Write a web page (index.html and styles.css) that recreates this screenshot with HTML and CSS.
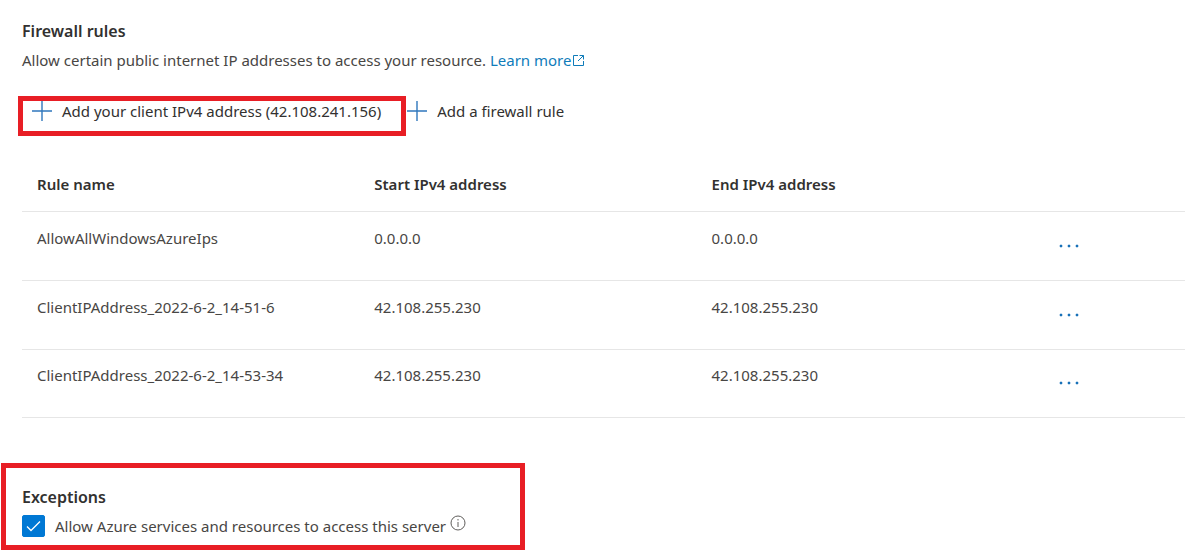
FILE: index.html
```html
<!DOCTYPE html>
<html lang="en">
<head>
<meta charset="utf-8">
<title>Firewall rules</title>
<link rel="stylesheet" href="styles.css">
</head>
<body>
<main class="page">
  <section class="firewall">
    <h2 class="heading">Firewall rules</h2>
    <p class="intro">Allow certain public internet IP addresses to access your resource.
      <a class="link" href="#">Learn more<svg class="external" viewBox="0 0 13 13" aria-hidden="true"><path d="M6 1.5H1.5v10h10V7M7.5 1.5h4v4M11.5 1.5L6 7"/></svg></a></p>
    <div class="commands">
      <button class="command highlight" type="button"><svg class="plus" viewBox="0 0 20 20" aria-hidden="true"><path d="M10 0v20M0 10h20"/></svg>Add your client IPv4 address (42.108.241.156)</button>
      <button class="command" type="button"><svg class="plus" viewBox="0 0 20 20" aria-hidden="true"><path d="M10 0v20M0 10h20"/></svg>Add a firewall rule</button>
    </div>
    <table class="rules">
      <thead>
        <tr><th scope="col">Rule name</th><th scope="col">Start IPv4 address</th><th scope="col">End IPv4 address</th><td></td></tr>
      </thead>
      <tbody>
        <tr><td>AllowAllWindowsAzureIps</td><td>0.0.0.0</td><td>0.0.0.0</td><td><button class="more" type="button" aria-label="More options"><svg viewBox="0 0 20 4" aria-hidden="true"><path d="M1 1h2v2H1zM9 1h2v2H9zM17 1h2v2h-2z"/></svg></button></td></tr>
        <tr><td>ClientIPAddress_2022-6-2_14-51-6</td><td>42.108.255.230</td><td>42.108.255.230</td><td><button class="more" type="button" aria-label="More options"><svg viewBox="0 0 20 4" aria-hidden="true"><path d="M1 1h2v2H1zM9 1h2v2H9zM17 1h2v2h-2z"/></svg></button></td></tr>
        <tr><td>ClientIPAddress_2022-6-2_14-53-34</td><td>42.108.255.230</td><td>42.108.255.230</td><td><button class="more" type="button" aria-label="More options"><svg viewBox="0 0 20 4" aria-hidden="true"><path d="M1 1h2v2H1zM9 1h2v2H9zM17 1h2v2h-2z"/></svg></button></td></tr>
      </tbody>
    </table>
  </section>
  <section class="exceptions highlight">
    <h2 class="heading">Exceptions</h2>
    <div class="option">
      <span class="tick">
        <input class="box" type="checkbox" id="allow-azure" checked>
        <svg class="mark" viewBox="0 0 23 22" aria-hidden="true"><path d="M5 11.5l4 4 9-9"/></svg>
      </span>
      <label for="allow-azure">Allow Azure services and resources to access this server</label>
      <svg class="info" viewBox="0 0 16 16" role="img" aria-label="Information"><circle cx="8" cy="8" r="7"/><path d="M8 7v5M8 4v1.5"/></svg>
    </div>
  </section>
</main>
</body>
</html>
```
FILE: styles.css
```css
* {
  box-sizing: border-box;
}

body {
  margin: 0;
  background: #fff;
  color: #484644;
  font: 15px/20px "Segoe UI", "Noto Sans", "Open Sans", sans-serif;
}

.page {
  padding-top: 20px;
}

.firewall {
  padding-left: 22px;
}

.heading {
  margin: 0;
  font-size: 16px;
  font-weight: 600;
  line-height: 22px;
  color: #323130;
}

.intro {
  margin: 8px 0 26px;
}

.link {
  color: #0f7cba;
  text-decoration: none;
}

.external {
  width: 13px;
  height: 13px;
  margin-left: 1px;
  vertical-align: -1px;
  fill: none;
  stroke: currentColor;
}

.commands {
  display: flex;
  flex-wrap: wrap;
  margin-left: -4px;
}

.command {
  display: flex;
  align-items: flex-start;
  gap: 10px;
  padding: 0;
  border: 5px solid transparent;
  border-left-width: 1px;
  background: none;
  color: #323130;
  font: inherit;
}

.highlight {
  border: 5px solid #e81e25;
}

.command.highlight {
  padding: 0 20px 10px 9px;
}

.plus {
  flex: none;
  width: 20px;
  height: 20px;
  fill: none;
  stroke: #2f77bd;
  stroke-width: 1.4;
}

.rules {
  width: 100%;
  margin-top: 22px;
  border-collapse: collapse;
  table-layout: fixed;
}

.rules th,
.rules td {
  width: 29%;
  height: 69px;
  padding: 16px 0 0 15px;
  border-bottom: 1px solid #e6e6e6;
  text-align: left;
  vertical-align: top;
}

.rules th {
  color: #323130;
  font-weight: 600;
}

.rules thead th,
.rules thead td {
  height: 53px;
}

.rules tbody tr:last-child td {
  height: 68px;
  padding-top: 15px;
}

.rules th:last-child,
.rules td:last-child {
  width: 13%;
}

.more {
  display: block;
  margin-top: 8px;
  padding: 8px 8px 8px 10px;
  border: 0;
  background: none;
}

.more svg {
  display: block;
  width: 20px;
  height: 4px;
  fill: #1a73b8;
  stroke: #1a73b8;
  stroke-width: 0.5;
}

.exceptions {
  width: fit-content;
  margin: 45px 0 0 1px;
  padding: 18px 54px 8px 16px;
}

.option {
  display: flex;
  align-items: center;
  margin-top: 7px;
}

.tick {
  display: grid;
  margin-right: 10px;
}

.box,
.mark {
  grid-area: 1 / 1;
  width: 23px;
  height: 22px;
  margin: 0;
}

.box {
  appearance: none;
  border: 1px solid #0078d4;
  border-radius: 2px;
}

.box:checked {
  background: #0078d4;
}

.mark {
  pointer-events: none;
  fill: none;
  stroke: #fff;
  stroke-width: 1.3;
}

.info {
  align-self: flex-start;
  width: 16px;
  height: 16px;
  margin-left: 4px;
  fill: none;
  stroke: #605e5c;
}
```
